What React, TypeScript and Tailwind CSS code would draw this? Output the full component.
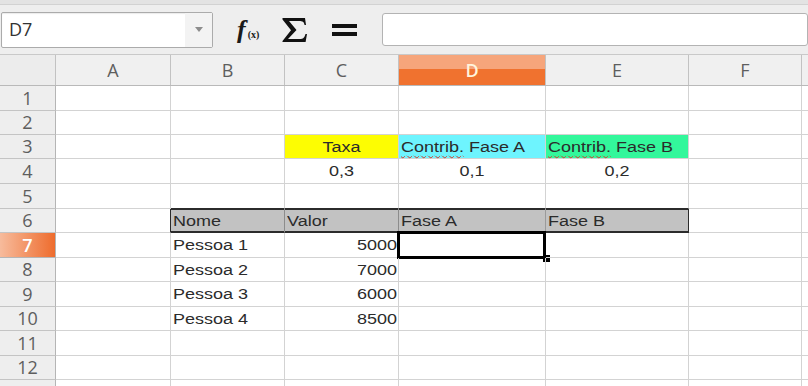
import React from 'react';

type Cell = {
  text?: string;
  align?: 'left' | 'center' | 'right';
  cls?: string;
  spell?: boolean;
};

const COLS = [
  { id: 'A', w: 'w-[115px]' },
  { id: 'B', w: 'w-[114px]' },
  { id: 'C', w: 'w-[114px]' },
  { id: 'D', w: 'w-[147px]' },
  { id: 'E', w: 'w-[143px]' },
  { id: 'F', w: 'w-[113px]' },
  { id: 'G', w: 'w-[60px]' },
];

const ROW_H = [
  'h-[25px]', 'h-[24px]', 'h-[24px]', 'h-[25px]', 'h-[25px]', 'h-[24px]',
  'h-[25px]', 'h-[24px]', 'h-[25px]', 'h-[24px]', 'h-[25px]', 'h-[24px]', 'h-[24px]',
];

const HEAD6 = 'bg-[#c2c2c2] border-b-[#2b2b2b] shadow-[inset_0_1px_0_#2b2b2b,inset_0_-1px_0_#2b2b2b]';

const cells: Record<string, Cell> = {
  C3: { text: 'Taxa', align: 'center', cls: 'bg-[#fdfd02]' },
  D3: { text: 'Contrib. Fase A', spell: true, cls: 'bg-[#6ef4fe]' },
  E3: { text: 'Contrib. Fase B', spell: true, cls: 'bg-[#33f79b]' },
  C4: { text: '0,3', align: 'center' },
  D4: { text: '0,1', align: 'center' },
  E4: { text: '0,2', align: 'center' },
  B5: { cls: 'border-b-[#2b2b2b]' },
  C5: { cls: 'border-b-[#2b2b2b]' },
  D5: { cls: 'border-b-[#2b2b2b]' },
  E5: { cls: 'border-b-[#2b2b2b]' },
  A6: { cls: 'border-r-[#2b2b2b]' },
  B6: { text: 'Nome', cls: `${HEAD6} border-r-[#8c8c8c]` },
  C6: { text: 'Valor', cls: `${HEAD6} border-r-[#8c8c8c]` },
  D6: { text: 'Fase A', cls: `${HEAD6} border-r-[#9a9a9a]` },
  E6: { text: 'Fase B', cls: `${HEAD6} border-r-[#2b2b2b] shadow-[inset_0_1px_0_#2b2b2b,inset_0_-1px_0_#2b2b2b,inset_-1px_0_0_#2b2b2b]` },
  B7: { text: 'Pessoa 1' },
  C7: { text: '5000', align: 'right' },
  B8: { text: 'Pessoa 2' },
  C8: { text: '7000', align: 'right' },
  B9: { text: 'Pessoa 3' },
  C9: { text: '6000', align: 'right' },
  B10: { text: 'Pessoa 4' },
  C10: { text: '8500', align: 'right' },
};

function CellText({ cell }: { cell: Cell }) {
  if (!cell.text) return null;
  if (cell.spell) {
    const [first, ...rest] = cell.text.split(' ');
    return (
      <span className="inline-block scale-y-[0.86]">
        <span className="underline decoration-wavy decoration-[#d23a2a] decoration-1 underline-offset-[3px]">{first}</span>{' '}
        {rest.join(' ')}
      </span>
    );
  }
  return <span className="inline-block scale-y-[0.86]">{cell.text}</span>;
}

function Toolbar() {
  return (
    <div>
      <div className="h-[5px] bg-[#e3e3e3] border-b border-[#d2d2d2]" />
      <div className="h-[50px] bg-[#eeeeee] border-b border-[#c9c9c9] flex items-center">
        <div className="ml-[1px] w-[212px] h-[36px] flex border border-[#ababab] rounded-[2px] bg-white shadow-[inset_0_1px_1px_rgba(0,0,0,0.08)]">
          <div className="flex-1 flex items-center pl-[7px] text-[18px] text-[#333] font-['Open_Sans',sans-serif]">D7</div>
          <div className="w-[27px] bg-[#f3f3f3] flex items-center justify-center">
            <svg width="8" height="5" viewBox="0 0 8 5">
              <path d="M0 0H8L4 5Z" fill="#8d8d8d" />
            </svg>
          </div>
        </div>
        <div className="ml-[24px] w-[30px] flex items-baseline gap-[1px] font-['Liberation_Serif',serif] text-[#1a1a1a]">
          <span className="italic font-bold text-[26px] leading-none pr-[1px]">f</span>
          <span className="font-bold text-[10px] leading-none">(x)</span>
        </div>
        <svg className="ml-[15px]" width="25" height="24" viewBox="0 0 25 24">
          <path
            d="M0.5 0H23L24 7H22.6C22 3.8 20.6 3 17 3H7L14.5 12L6 21H18C21 21 22.4 19.8 23.5 16H25L23.6 24H0.5V23L9 12.3L0.5 1.5Z"
            fill="#111"
          />
        </svg>
        <svg className="ml-[25px]" width="25" height="12" viewBox="0 0 25 12">
          <rect x="0" y="0" width="25" height="4" fill="#111" />
          <rect x="0" y="8" width="25" height="4" fill="#111" />
        </svg>
        <div className="ml-[25px] flex-1 h-[33px] bg-white border border-[#b3b3b3] rounded-[3px]" />
      </div>
    </div>
  );
}

export default function App() {
  const rows = Array.from({ length: 13 }, (_, i) => i + 1);
  return (
    <div className="w-[808px] h-[386px] overflow-hidden bg-white">
      <Toolbar />
      <div className="w-[1000px]">
        <div className="flex h-[31px] border-b border-[#b9b9b9] bg-[#f0f0f0] font-['Open_Sans',sans-serif] text-[18px] text-[#5e5e5e]">
          <div className="w-[56px] shrink-0 border-r border-[#c2c2c2] bg-[#ececec]" />
          {COLS.map((c) =>
            c.id === 'D' ? (
              <div
                key={c.id}
                className={`${c.w} shrink-0 border-r border-[#c2c2c2] flex items-center justify-center bg-[linear-gradient(to_bottom,#f6a57b_0%,#f6a57b_47%,#f0722f_47%,#f0722f_100%)] text-[#fff4dc] font-semibold`}
              >
                D
              </div>
            ) : (
              <div key={c.id} className={`${c.w} shrink-0 border-r border-[#c2c2c2] flex items-center justify-center`}>
                {c.id !== 'G' ? c.id : ''}
              </div>
            ),
          )}
        </div>
        {rows.map((r, i) => (
          <div key={r} className={`${ROW_H[i]} flex`}>
            {r === 7 ? (
              <div className="w-[56px] shrink-0 border-r border-b border-[#b5b5b5] bg-[linear-gradient(to_right,#f7bb9c,#ee6c2d)] flex items-center justify-center font-['Open_Sans',sans-serif] text-[18px] font-semibold text-white">
                {r}
              </div>
            ) : (
              <div className="w-[56px] shrink-0 border-r border-b border-[#c4c4c4] border-r-[#b5b5b5] bg-[#eeeeee] flex items-center justify-center font-['Open_Sans',sans-serif] text-[18px] text-[#5e5e5e]">
                {r < 13 ? r : ''}
              </div>
            )}
            {COLS.map((c) => {
              const key = `${c.id}${r}`;
              const cell = cells[key] ?? {};
              const align =
                cell.align === 'center' ? 'justify-center' : cell.align === 'right' ? 'justify-end pr-[1px]' : 'justify-start pl-[2px]';
              return (
                <div
                  key={key}
                  className={`${c.w} shrink-0 relative border-r border-b border-[#d3d3d3] flex items-center whitespace-nowrap overflow-visible font-['Liberation_Sans',Arial,sans-serif] text-[18px] leading-none text-[#2b2b2b] ${align} ${cell.cls ?? ''}`}
                >
                  <CellText cell={cell} />
                  {key === 'D7' && (
                    <>
                      <div className="absolute -left-[2px] -top-[2px] w-[149px] h-[28px] border-[3px] border-black" />
                      <div className="absolute left-[144px] top-[22px] w-[7px] h-[7px] bg-black" />
                    </>
                  )}
                </div>
              );
            })}
          </div>
        ))}
      </div>
    </div>
  );
}
